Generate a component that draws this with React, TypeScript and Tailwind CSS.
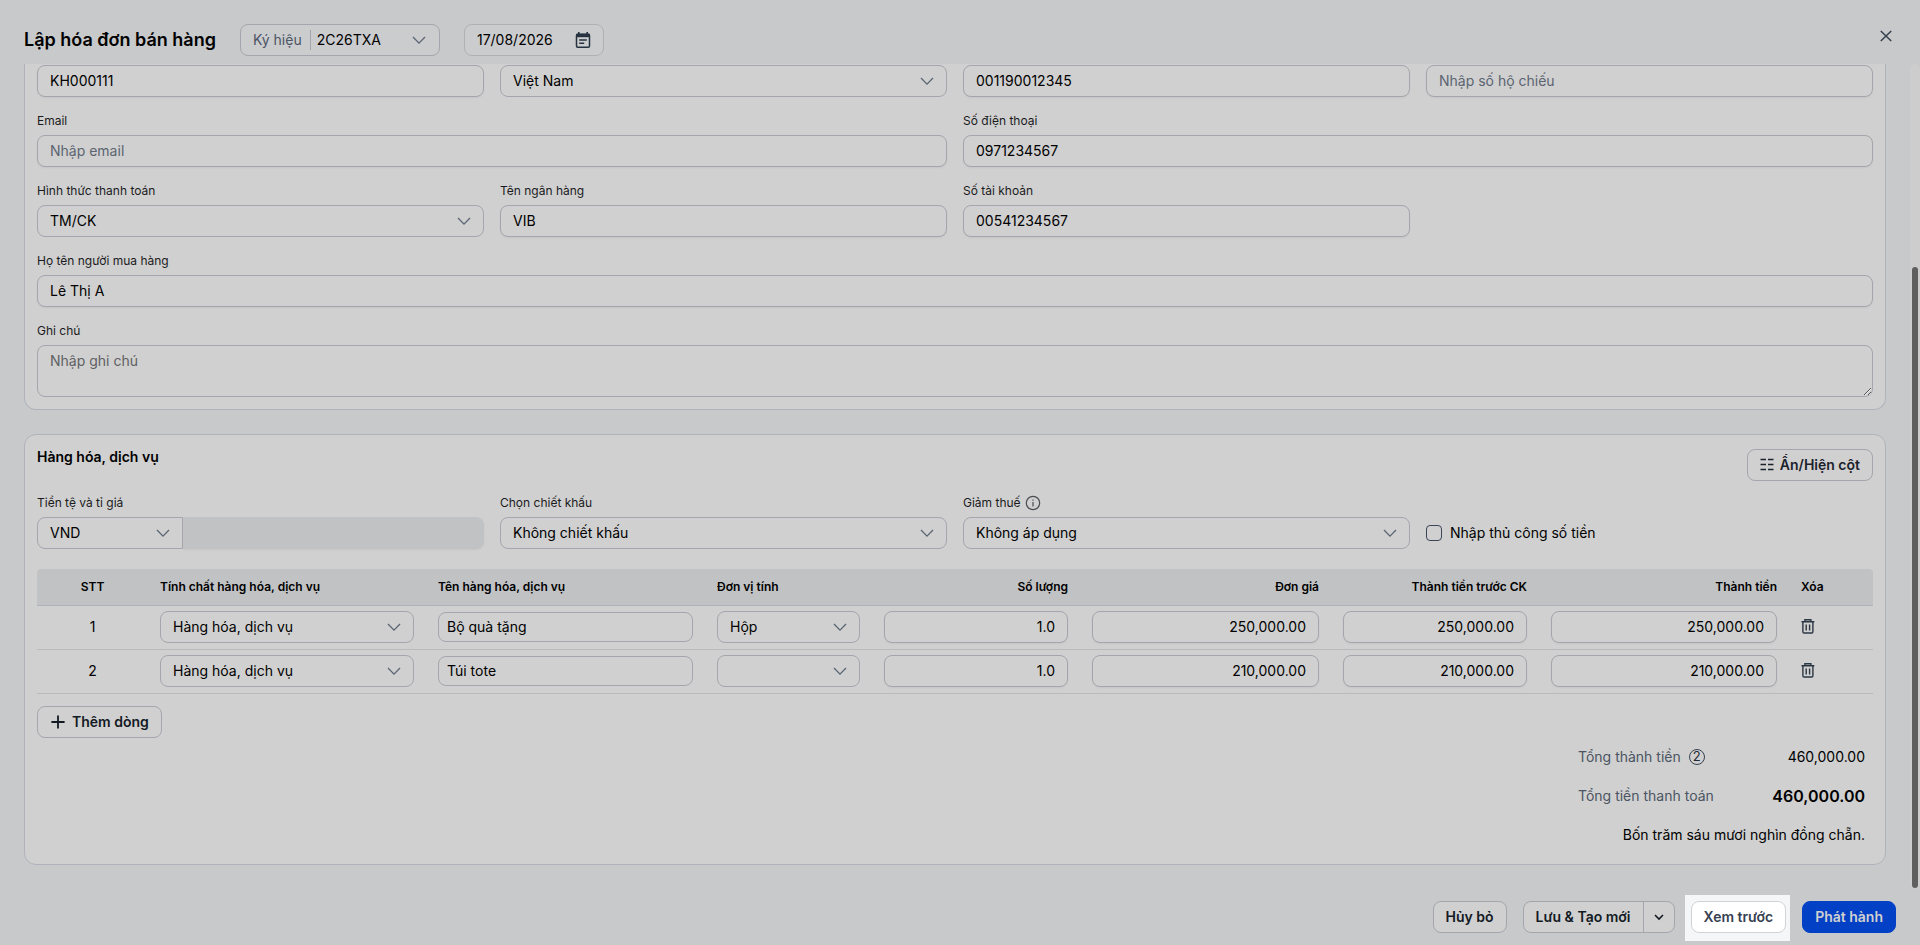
import type { InputHTMLAttributes, ReactNode } from "react";
import { useId, useState } from "react";

const BOX =
  "h-8 w-full rounded-lg border border-[#a5a6ad] bg-[#d0d0d0] px-3 text-sm text-black outline-none";

const ITEMS = [
  { id: 1, name: "Bộ quà tặng", unit: "Hộp", quantity: "1.0", price: "250,000.00", total: "250,000.00" },
  { id: 2, name: "Túi tote", unit: "", quantity: "1.0", price: "210,000.00", total: "210,000.00" },
];

export default function App() {
  return (
    <div className="flex min-h-screen flex-col bg-[#c8c9cb] font-['Inter',sans-serif] text-sm text-black">
      <Header />
      <div className="flex flex-1">
        <main className="min-w-0 flex-1 space-y-6 pr-6 pb-6 pl-6">
          <BuyerSection />
          <ItemsSection />
        </main>
        <div className="w-2.5 rounded-full bg-[#cdcdcd] px-0.5" aria-hidden="true">
          <div className="h-[24.6%]" />
          <div className="h-[75.3%] rounded-full bg-[#5f5f5f]" />
        </div>
      </div>
      <Footer />
    </div>
  );
}

function Header() {
  return (
    <header className="flex items-center pt-6 pr-6 pb-2 pl-6">
      <h1 className="text-lg leading-8 font-semibold">Lập hóa đơn bán hàng</h1>
      <div className="relative ml-6 flex h-8 w-50 items-center rounded-lg border border-[#a5a6ad] bg-[#cbccce] pl-3">
        <label className="border-r border-[#a5a6ad] pr-2 text-[#4b5563]" htmlFor="symbol">
          Ký hiệu
        </label>
        <select id="symbol" className="h-full flex-1 appearance-none bg-transparent pl-1.5 outline-none">
          <option>2C26TXA</option>
        </select>
        <ChevronDown />
      </div>
      <div className="ml-6 flex h-8 w-35 items-center rounded-lg border border-[#b0b1b6] bg-[#cbccce] px-3">
        <input
          aria-label="Ngày hóa đơn"
          className="min-w-0 flex-1 bg-transparent outline-none"
          defaultValue="17/08/2026"
        />
        <CalendarIcon />
      </div>
      <button
        aria-label="Đóng"
        className="ml-auto flex h-6 w-5 items-center justify-center self-start text-[#333f4c]"
        type="button"
      >
        <svg className="size-4" viewBox="0 0 16 16" fill="none" stroke="currentColor" strokeWidth="1.5">
          <path d="M2.8 3l10.4 10M13.2 3L2.8 13" />
        </svg>
      </button>
    </header>
  );
}

function BuyerSection() {
  return (
    <section className="rounded-b-xl border-x border-b border-[#b0b3bb] bg-[#d0d0d0] px-3 pt-px pb-3">
      <div className="grid grid-cols-4 gap-4">
        <TextInput aria-label="Mã khách hàng" defaultValue="KH000111" />
        <SelectBox label="Quốc tịch" options={["Việt Nam"]} />
        <TextInput aria-label="Số CCCD" defaultValue="001190012345" />
        <TextInput aria-label="Số hộ chiếu" placeholder="Nhập số hộ chiếu" />

        <Field label="Email" className="col-span-2">
          {(id) => <TextInput id={id} placeholder="Nhập email" />}
        </Field>
        <Field label="Số điện thoại" className="col-span-2">
          {(id) => <TextInput id={id} defaultValue="0971234567" />}
        </Field>

        <Field label="Hình thức thanh toán">
          {(id) => <SelectBox id={id} options={["TM/CK"]} />}
        </Field>
        <Field label="Tên ngân hàng">{(id) => <TextInput id={id} defaultValue="VIB" />}</Field>
        <Field label="Số tài khoản">
          {(id) => <TextInput id={id} defaultValue="00541234567" />}
        </Field>

        <Field label="Họ tên người mua hàng" className="col-span-4">
          {(id) => <TextInput id={id} defaultValue="Lê Thị A" />}
        </Field>

        <Field label="Ghi chú" className="col-span-4">
          {(id) => (
            <textarea
              id={id}
              className="block h-13 w-full resize rounded-lg border border-[#a5a6ad] px-3 py-[5px] text-sm outline-none placeholder:text-[#5f6062]"
              placeholder="Nhập ghi chú"
            />
          )}
        </Field>
      </div>
    </section>
  );
}

function ItemsSection() {
  const [manual, setManual] = useState(false);

  return (
    <section className="rounded-xl border border-[#b0b3bb] bg-[#d0d0d0] px-3 pt-3 pb-[18px]">
      <div className="flex items-start justify-between">
        <h2 className="leading-5 font-semibold">Hàng hóa, dịch vụ</h2>
        <button
          className="mt-0.5 flex h-8 items-center gap-1.5 rounded-lg border border-[#a5a6ad] px-3 font-semibold text-[#1b222c]"
          type="button"
        >
          <ColumnsIcon />
          Ẩn/Hiện cột
        </button>
      </div>

      <div className="mt-3.5 grid grid-cols-4 gap-x-4">
        <Field label="Tiền tệ và tỉ giá">
          {(id) => (
            <div className="flex">
              <div className="relative w-[146px] shrink-0">
                <select
                  id={id}
                  className="h-8 w-full appearance-none rounded-l-lg border border-[#a5a6ad] bg-[#d0d0d0] px-3 outline-none"
                >
                  <option>VND</option>
                </select>
                <ChevronDown />
              </div>
              <input
                aria-label="Tỉ giá"
                className="h-8 min-w-0 flex-1 rounded-r-lg bg-[#c1c2c4] px-3 shadow-xs"
                disabled
              />
            </div>
          )}
        </Field>
        <Field label="Chọn chiết khấu">
          {(id) => <SelectBox id={id} options={["Không chiết khấu"]} />}
        </Field>
        <Field label="Giảm thuế" icon={<InfoIcon />}>
          {(id) => <SelectBox id={id} options={["Không áp dụng"]} />}
        </Field>
        <label className="flex h-8 items-center gap-2 self-end">
          <input
            className="size-4 appearance-none rounded-sm border border-[#3a4658] checked:bg-[#0241c6]"
            type="checkbox"
            checked={manual}
            onChange={(event) => setManual(event.target.checked)}
          />
          Nhập thủ công số tiền
        </label>
      </div>

      <ItemsTable />

      <button
        className="mt-3 flex h-8 items-center gap-1.5 rounded-lg border border-[#a5a6ad] px-3 font-semibold text-[#131a24]"
        type="button"
      >
        <svg className="size-4" viewBox="0 0 16 16" fill="none" stroke="currentColor" strokeWidth="1.8">
          <path d="M8 1.4v13.2M1.4 8h13.2" />
        </svg>
        Thêm dòng
      </button>

      <Totals />
    </section>
  );
}

function ItemsTable() {
  return (
    <table className="mt-5 w-full table-fixed border-separate border-spacing-0">
      <colgroup>
        <col className="w-[111px]" />
        <col className="w-[278px]" />
        <col className="w-[279px]" />
        <col className="w-[167px]" />
        <col className="w-[208px]" />
        <col className="w-[251px]" />
        <col className="w-[208px]" />
        <col className="w-[250px]" />
        <col className="w-[84px]" />
      </colgroup>
      <thead>
        <tr className="h-[37px] text-left text-xs [&>th]:border-b [&>th]:border-[#b0b3bb] [&>th]:bg-[#c1c2c4] [&>th]:px-3 [&>th]:font-semibold">
          <th className="rounded-tl-sm text-center" scope="col">STT</th>
          <th scope="col">Tính chất hàng hóa, dịch vụ</th>
          <th scope="col">Tên hàng hóa, dịch vụ</th>
          <th scope="col">Đơn vị tính</th>
          <th className="text-right" scope="col">Số lượng</th>
          <th className="text-right" scope="col">Đơn giá</th>
          <th className="text-right" scope="col">Thành tiền trước CK</th>
          <th className="text-right" scope="col">Thành tiền</th>
          <th className="rounded-tr-sm" scope="col">Xóa</th>
        </tr>
      </thead>
      <tbody>
        {ITEMS.map((item) => (
          <tr
            key={item.id}
            className="[&>td]:border-b [&>td]:border-[#b9babb] [&>td]:px-3 [&>td]:pt-[5px] [&>td]:pb-1.5"
          >
            <td className="text-center">{item.id}</td>
            <td>
              <SelectBox label="Tính chất" options={["Hàng hóa, dịch vụ"]} />
            </td>
            <td>
              <input
                aria-label="Tên hàng hóa"
                className="block h-[30px] w-full rounded-lg border border-[#a5a6ad] px-2 pb-0.5 outline-none"
                defaultValue={item.name}
              />
            </td>
            <td>
              <SelectBox label="Đơn vị tính" options={[item.unit]} />
            </td>
            <td>
              <NumberInput aria-label="Số lượng" defaultValue={item.quantity} />
            </td>
            <td>
              <NumberInput aria-label="Đơn giá" defaultValue={item.price} />
            </td>
            <td>
              <NumberInput aria-label="Thành tiền trước CK" defaultValue={item.total} />
            </td>
            <td>
              <NumberInput aria-label="Thành tiền" defaultValue={item.total} />
            </td>
            <td>
              <button aria-label="Xóa dòng" className="block text-[#2b3643]" type="button">
                <TrashIcon />
              </button>
            </td>
          </tr>
        ))}
      </tbody>
    </table>
  );
}

function Totals() {
  return (
    <div className="mt-[7px] flex flex-col items-end gap-4 pr-2">
      <dl className="w-[287px] space-y-4">
        <div className="flex h-[23px] items-center justify-between">
          <dt className="flex items-center gap-2 text-[#4b5563]">
            Tổng thành tiền
            <span className="flex size-4 items-center justify-center rounded-full border border-[#374151] text-[13px] text-[#1f2937]">
              2
            </span>
          </dt>
          <dd>460,000.00</dd>
        </div>
        <div className="flex h-[23px] items-center justify-between">
          <dt className="text-[#4b5563]">Tổng tiền thanh toán</dt>
          <dd className="text-base font-semibold">460,000.00</dd>
        </div>
      </dl>
      <p className="leading-[23px]">Bốn trăm sáu mươi nghìn đồng chẵn.</p>
    </div>
  );
}

function Footer() {
  const button = "h-8 rounded-lg border px-3 font-semibold";

  return (
    <footer className="flex items-center justify-end gap-4 px-6 py-3">
      <button className={`${button} border-[#a5a6ad] bg-[#d0d0d0] text-[#131a24]`} type="button">
        Hủy bỏ
      </button>
      <div className="flex h-8 rounded-lg border border-[#a5a6ad] bg-[#d0d0d0] text-[#131a24]">
        <button className="px-3 font-semibold" type="button">
          Lưu &amp; Tạo mới
        </button>
        <button
          aria-label="Thêm tùy chọn"
          className="flex w-[31px] items-center justify-center border-l border-[#a5a6ad]"
          type="button"
        >
          <svg className="size-4" viewBox="0 0 16 16" fill="none" stroke="currentColor" strokeWidth="1.6">
            <path d="M4 6l4 4 4-4" />
          </svg>
        </button>
      </div>
      {/* highlighted tour step */}
      <div className="-mt-1.5 -mr-1 -mb-2 -ml-1.5 bg-[#f5f6f8] pt-1.5 pr-1 pb-2 pl-1.5">
        <button className={`${button} block border-[#d1d3d8] bg-white text-[#374151]`} type="button">
          Xem trước
        </button>
      </div>
      <button className={`${button} border-[#0241c6] bg-[#0241c6] text-[#d0d0d0]`} type="button">
        Phát hành
      </button>
    </footer>
  );
}

function Field({
  label,
  icon,
  className = "",
  children,
}: {
  label: string;
  icon?: ReactNode;
  className?: string;
  children: (id: string) => ReactNode;
}) {
  const id = useId();

  return (
    <div className={className}>
      <div className="mb-1.5 flex h-4 items-center gap-1">
        <label className="text-xs text-[#1b1b1d]" htmlFor={id}>
          {label}
        </label>
        {icon}
      </div>
      {children(id)}
    </div>
  );
}

function TextInput(props: InputHTMLAttributes<HTMLInputElement>) {
  return <input className={`${BOX} block pb-0.5 shadow-xs placeholder:text-[#5b6470]`} {...props} />;
}

function NumberInput(props: InputHTMLAttributes<HTMLInputElement>) {
  return <input className={`${BOX} block pb-0.5 text-right shadow-xs`} inputMode="decimal" {...props} />;
}

function SelectBox({ id, label, options }: { id?: string; label?: string; options: string[] }) {
  return (
    <div className="relative">
      <select id={id} aria-label={label} className={`${BOX} block appearance-none`}>
        {options.map((option) => (
          <option key={option}>{option}</option>
        ))}
      </select>
      <ChevronDown />
    </div>
  );
}

function ChevronDown() {
  return (
    <svg
      className="pointer-events-none absolute top-1/2 right-2.5 size-5 -translate-y-1/2 text-[#5b6573]"
      viewBox="0 0 24 24"
      fill="none"
      stroke="currentColor"
      strokeWidth="1.6"
      aria-hidden="true"
    >
      <path d="M19.2 8.4L12 15.8 4.8 8.4" />
    </svg>
  );
}

function CalendarIcon() {
  return (
    <svg className="size-4 text-[#26323f]" viewBox="0 0 16 16" fill="none" stroke="currentColor" aria-hidden="true">
      <rect x="1.5" y="2.2" width="13" height="13" rx="1.2" strokeWidth="1.5" />
      <path d="M1.2 3.5h13.6" strokeWidth="3.4" />
      <path d="M3.8 0v3M12.2 0v3" strokeWidth="1.6" />
      <path d="M4.2 8h7.6M4.2 11.3h5" strokeWidth="1.4" />
    </svg>
  );
}

function ColumnsIcon() {
  return (
    <svg className="size-3.5" viewBox="0 0 14 14" stroke="currentColor" strokeWidth="1.3" aria-hidden="true">
      <path d="M.5 1.5H6M8 1.5h5.5M.5 6.5H6M8 6.5h5.5M.5 11.5H6M8 11.5h5.5" />
    </svg>
  );
}

function InfoIcon() {
  return (
    <svg className="size-4 text-[#4a4c50]" viewBox="0 0 16 16" fill="none" stroke="currentColor" aria-hidden="true">
      <circle cx="8" cy="8" r="6.7" strokeWidth="1.2" />
      <path d="M8 7v4.4M8 4.5v1.3" strokeWidth="1.2" />
    </svg>
  );
}

function TrashIcon() {
  return (
    <svg className="h-4 w-3.5" viewBox="0 0 14 16" fill="none" stroke="currentColor" strokeWidth="1.4" aria-hidden="true">
      <path d="M.5 2.8h12.8M3.9 2.6V.8h6v1.8M1.9 3v9.8c0 .8.4 1.2 1.2 1.2h7.6c.8 0 1.2-.4 1.2-1.2V3" />
      <path d="M5.2 5.4v6.2M8.6 5.4v6.2" />
    </svg>
  );
}
